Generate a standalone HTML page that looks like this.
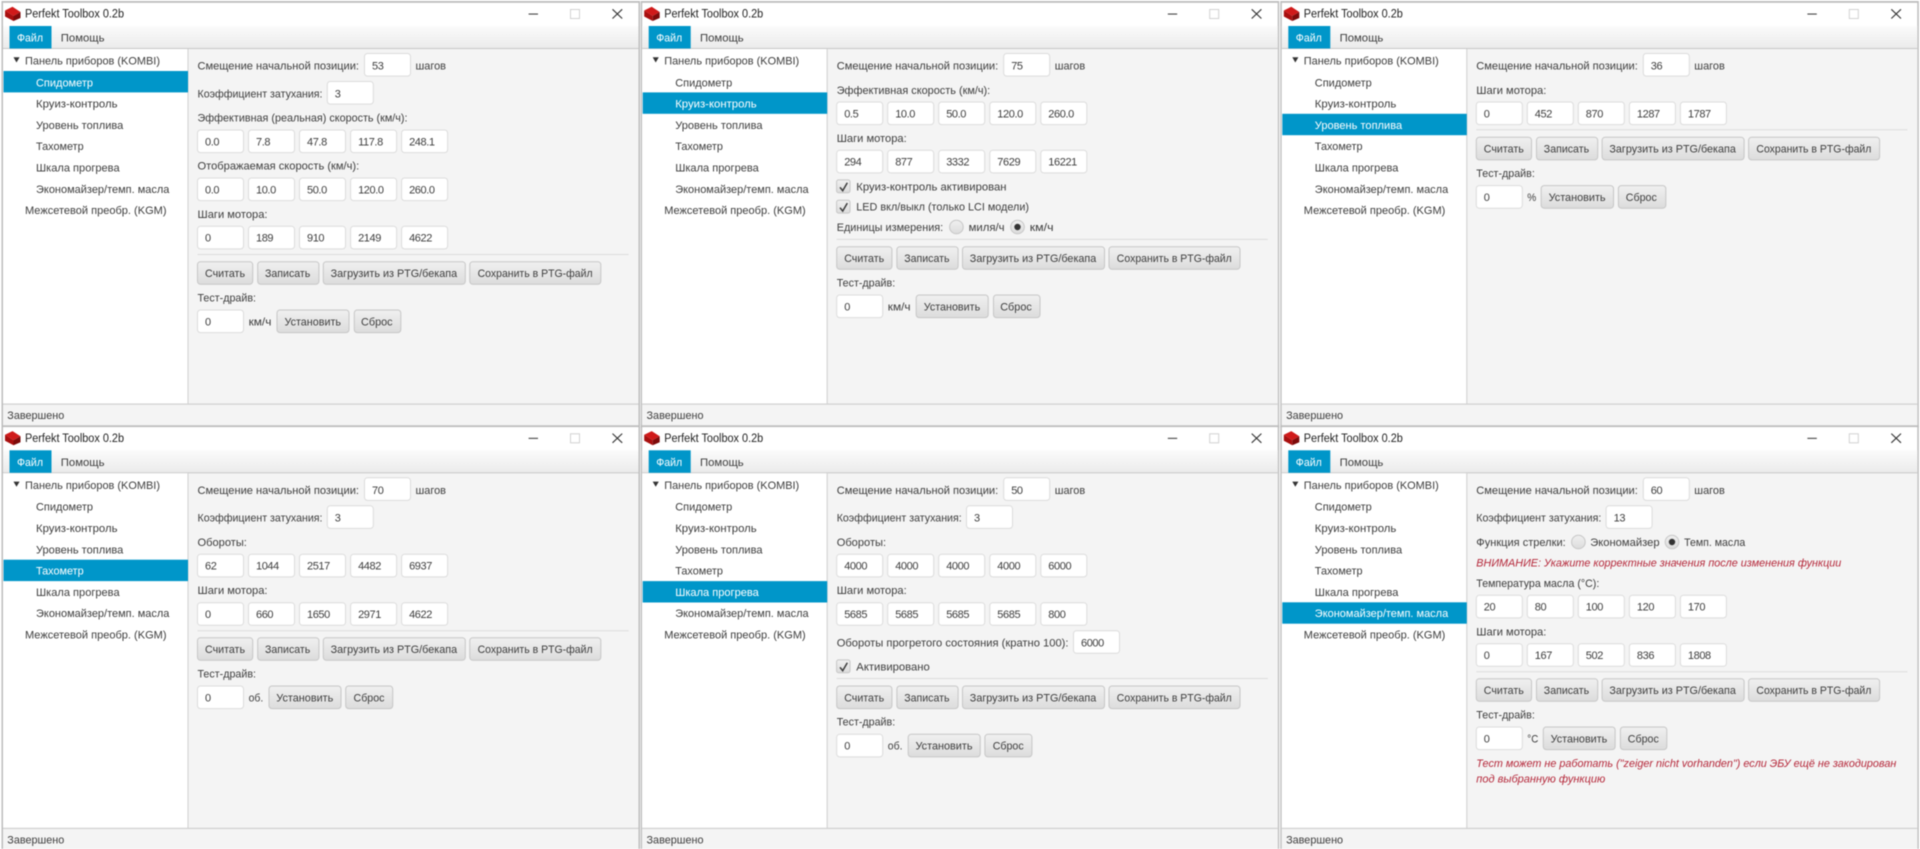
<!DOCTYPE html>
<html lang="ru"><head><meta charset="utf-8"><title>Perfekt Toolbox 0.2b</title>
<style>
html,body{margin:0;padding:0;width:1920px;height:849px;overflow:hidden;background:#fff}
svg{display:block;filter:blur(.5px)}
text{font-family:"Liberation Sans","DejaVu Sans",sans-serif;font-size:11.3px;fill:#3d3d3d;white-space:pre}
.v{letter-spacing:-.4px;font-size:11px}
.w{fill:#fff}
.r{fill:#b5283a;font-style:italic}
.t{fill:#222;font-size:11.5px}
.i{width:46px;height:22.6px;rx:3px;fill:#fff;stroke:#dcdcdc;stroke-width:1}
.i2{height:22.6px;rx:3px;fill:url(#gb);stroke:#c6c6c6;stroke-width:1}
.s{stroke:#dcdcdc;stroke-width:1}
.sel{fill:#0096c9;width:184.5px;height:21.4px;x:3.5px}
.ck{fill:none;stroke:#3a3a3a;stroke-width:1.5}
</style></head><body>
<svg xmlns="http://www.w3.org/2000/svg" width="1920" height="849" viewBox="0 0 1920 849">
<defs>
<linearGradient id="gb" x1="0" y1="0" x2="0" y2="1"><stop offset="0" stop-color="#f0f0f0"/><stop offset="1" stop-color="#dcdcdc"/></linearGradient>
<linearGradient id="gm" x1="0" y1="0" x2="0" y2="1"><stop offset="0" stop-color="#fbfbfb"/><stop offset="1" stop-color="#ebebeb"/></linearGradient>
<g id="chrome">
<rect x="1.5" y="1" width="638.5" height="426.5" fill="#bdbdbd"/>
<rect x="3" y="2.8" width="635.5" height="423" fill="#fff"/>
<rect x="3" y="26" width="635.5" height="22.5" fill="url(#gm)"/>
<rect x="3" y="48" width="635.5" height="1.2" fill="#c8c8c8"/>
<rect x="3" y="49" width="635.5" height="377" fill="#f4f4f4"/>
<rect x="3" y="49" width="184.5" height="354.5" fill="#fff"/>
<rect x="187.5" y="49" width="1" height="355" fill="#d0d0d0"/>
<rect x="3" y="403.5" width="635.5" height="1.2" fill="#d0d0d0"/>
<rect x="9.5" y="26" width="42" height="22.5" fill="#0096c9"/>
<polygon points="13.5,57.3 19.6,57.3 16.5,62.5" fill="#333"/>
<rect x="528.6" y="13.5" width="9.4" height="1.1" fill="#444"/>
<rect x="570.5" y="9.5" width="9" height="9" fill="none" stroke="#d2d2d2" stroke-width="1"/>
<path d="M612.5 9.3L622.2 18.5M622.2 9.3L612.5 18.5" stroke="#333" stroke-width="1.1" fill="none"/>
<polygon points="5,10.5 12.5,6.8 20.5,12 13.5,16" fill="#d01a1a"/>
<polygon points="5,10.5 13.5,16 13.5,21 5,16.5" fill="#a80f0f"/>
<polygon points="13.5,16 20.5,12 20.5,18 13.5,21" fill="#7d0a0a"/>
</g>
<g id="btns">
<rect class="i2" x="197.5" y="0" width="55.2"/>
<rect class="i2" x="257.7" y="0" width="61.2"/>
<rect class="i2" x="323.3" y="0" width="142"/>
<rect class="i2" x="469.8" y="0" width="131"/>
</g>
<g id="row5">
<rect class="i" x="197.5" y="0"/><rect class="i" x="248.5" y="0"/><rect class="i" x="299.5" y="0"/><rect class="i" x="350.6" y="0"/><rect class="i" x="401.6" y="0"/>
</g>
<g id="cb"><rect x="197.4" y="-6.4" width="13.4" height="12.8" rx="2" fill="url(#gb)" stroke="#c6c6c6"/><path class="ck" d="M200.8 1L203.5 4.4L208.1-3.6"/></g>
</defs>

<!-- WINDOW 1 -->
<g transform="translate(0,0)">
<use href="#chrome"/>
<text class="t" x="25" y="17.5" textLength="99" lengthAdjust="spacingAndGlyphs">Perfekt Toolbox 0.2b</text>
<text class="w" x="17" y="41.5" textLength="26" lengthAdjust="spacingAndGlyphs">Файл</text>
<text x="60.8" y="41.5" textLength="43.7" lengthAdjust="spacingAndGlyphs">Помощь</text>
<rect class="sel" y="71"/>
<text x="25" y="64.7" textLength="135" lengthAdjust="spacingAndGlyphs">Панель приборов (KOMBI)</text>
<text class="w" x="36" y="86.3" textLength="57" lengthAdjust="spacingAndGlyphs">Спидометр</text>
<text x="36" y="107.7" textLength="81.5" lengthAdjust="spacingAndGlyphs">Круиз-контроль</text>
<text x="36" y="129" textLength="87.3" lengthAdjust="spacingAndGlyphs">Уровень топлива</text>
<text x="36" y="150.2" textLength="47.7" lengthAdjust="spacingAndGlyphs">Тахометр</text>
<text x="36" y="171.5" textLength="83.6" lengthAdjust="spacingAndGlyphs">Шкала прогрева</text>
<text x="36" y="192.8" textLength="133.4" lengthAdjust="spacingAndGlyphs">Экономайзер/темп. масла</text>
<text x="25" y="214" textLength="141.5" lengthAdjust="spacingAndGlyphs">Межсетевой преобр. (KGM)</text>
<text x="7.3" y="419" textLength="57" lengthAdjust="spacingAndGlyphs">Завершено</text>
<text x="197.5" y="69.7" textLength="161.5" lengthAdjust="spacingAndGlyphs">Смещение начальной позиции:</text>
<rect class="i" x="364.5" y="53.5"/><text class="v" x="372" y="69.7">53</text>
<text x="415.5" y="69.7" textLength="30.5" lengthAdjust="spacingAndGlyphs">шагов</text>
<text x="197.5" y="97.3" textLength="125" lengthAdjust="spacingAndGlyphs">Коэффициент затухания:</text>
<rect class="i" x="327.3" y="81.5"/><text class="v" x="334.8" y="97.3">3</text>
<text x="197.5" y="121.7" textLength="210" lengthAdjust="spacingAndGlyphs">Эффективная (реальная) скорость (км/ч):</text>
<use href="#row5" y="130"/>
<text class="v" x="205" y="145.3">0.0</text><text class="v" x="256" y="145.3">7.8</text><text class="v" x="307" y="145.3">47.8</text><text class="v" x="358.1" y="145.3">117.8</text><text class="v" x="409.1" y="145.3">248.1</text>
<text x="197.5" y="169.7" textLength="161.7" lengthAdjust="spacingAndGlyphs">Отображаемая скорость (км/ч):</text>
<use href="#row5" y="178"/>
<text class="v" x="205" y="193.3">0.0</text><text class="v" x="256" y="193.3">10.0</text><text class="v" x="307" y="193.3">50.0</text><text class="v" x="358.1" y="193.3">120.0</text><text class="v" x="409.1" y="193.3">260.0</text>
<text x="197.5" y="218" textLength="70" lengthAdjust="spacingAndGlyphs">Шаги мотора:</text>
<use href="#row5" y="226.3"/>
<text class="v" x="205" y="241.6">0</text><text class="v" x="256" y="241.6">189</text><text class="v" x="307" y="241.6">910</text><text class="v" x="358.1" y="241.6">2149</text><text class="v" x="409.1" y="241.6">4622</text>
<line class="s" x1="197.5" x2="628.6" y1="254.5" y2="254.5"/>
<g transform="translate(0,261.7)">
<use href="#btns"/>
<text x="205" y="15.3" textLength="40" lengthAdjust="spacingAndGlyphs">Считать</text>
<text x="265" y="15.3" textLength="45.3" lengthAdjust="spacingAndGlyphs">Записать</text>
<text x="330.6" y="15.3" textLength="126.5" lengthAdjust="spacingAndGlyphs">Загрузить из PTG/бекапа</text>
<text x="477.6" y="15.3" textLength="115" lengthAdjust="spacingAndGlyphs">Сохранить в PTG-файл</text>
<text x="197.5" y="39.6" textLength="58.5" lengthAdjust="spacingAndGlyphs">Тест-драйв:</text>
<rect class="i" x="197.5" y="48.3"/><text class="v" x="205" y="63.6">0</text>
<text x="248.6" y="63.6" textLength="22.8" lengthAdjust="spacingAndGlyphs">км/ч</text>
<rect class="i2" x="277" y="48.3" width="72"/><text x="284.5" y="63.6" textLength="56.5" lengthAdjust="spacingAndGlyphs">Установить</text>
<rect class="i2" x="354.3" y="48.3" width="46.5"/><text x="361" y="63.6" textLength="31.6" lengthAdjust="spacingAndGlyphs">Сброс</text>
</g>
</g>

<!-- WINDOW 2 -->
<g transform="translate(639.2,0)">
<use href="#chrome"/>
<text class="t" x="25" y="17.5" textLength="99" lengthAdjust="spacingAndGlyphs">Perfekt Toolbox 0.2b</text>
<text class="w" x="17" y="41.5" textLength="26" lengthAdjust="spacingAndGlyphs">Файл</text>
<text x="60.8" y="41.5" textLength="43.7" lengthAdjust="spacingAndGlyphs">Помощь</text>
<rect class="sel" y="92.4"/>
<text x="25" y="64.7" textLength="135" lengthAdjust="spacingAndGlyphs">Панель приборов (KOMBI)</text>
<text x="36" y="86.3" textLength="57" lengthAdjust="spacingAndGlyphs">Спидометр</text>
<text class="w" x="36" y="107.7" textLength="81.5" lengthAdjust="spacingAndGlyphs">Круиз-контроль</text>
<text x="36" y="129" textLength="87.3" lengthAdjust="spacingAndGlyphs">Уровень топлива</text>
<text x="36" y="150.2" textLength="47.7" lengthAdjust="spacingAndGlyphs">Тахометр</text>
<text x="36" y="171.5" textLength="83.6" lengthAdjust="spacingAndGlyphs">Шкала прогрева</text>
<text x="36" y="192.8" textLength="133.4" lengthAdjust="spacingAndGlyphs">Экономайзер/темп. масла</text>
<text x="25" y="214" textLength="141.5" lengthAdjust="spacingAndGlyphs">Межсетевой преобр. (KGM)</text>
<text x="7.3" y="419" textLength="57" lengthAdjust="spacingAndGlyphs">Завершено</text>
<text x="197.5" y="69.7" textLength="161.5" lengthAdjust="spacingAndGlyphs">Смещение начальной позиции:</text>
<rect class="i" x="364.5" y="53.5"/><text class="v" x="372" y="69.7">75</text>
<text x="415.5" y="69.7" textLength="30.5" lengthAdjust="spacingAndGlyphs">шагов</text>
<text x="197.5" y="94" textLength="153.5" lengthAdjust="spacingAndGlyphs">Эффективная скорость (км/ч):</text>
<use href="#row5" y="102"/>
<text class="v" x="205" y="117.3">0.5</text><text class="v" x="256" y="117.3">10.0</text><text class="v" x="307" y="117.3">50.0</text><text class="v" x="358.1" y="117.3">120.0</text><text class="v" x="409.1" y="117.3">260.0</text>
<text x="197.5" y="142" textLength="70" lengthAdjust="spacingAndGlyphs">Шаги мотора:</text>
<use href="#row5" y="150.3"/>
<text class="v" x="205" y="165.6">294</text><text class="v" x="256" y="165.6">877</text><text class="v" x="307" y="165.6">3332</text><text class="v" x="358.1" y="165.6">7629</text><text class="v" x="409.1" y="165.6">16221</text>
<use href="#cb" y="186.3"/>
<text x="217.1" y="190.3" textLength="150.2" lengthAdjust="spacingAndGlyphs">Круиз-контроль активирован</text>
<use href="#cb" y="206.7"/>
<text x="217.1" y="210.7" textLength="172.7" lengthAdjust="spacingAndGlyphs">LED вкл/выкл (только LCI модели)</text>
<text x="197.5" y="231" textLength="106.5" lengthAdjust="spacingAndGlyphs">Единицы измерения:</text>
<circle cx="317.2" cy="227" r="6.8" fill="url(#gb)" stroke="#c6c6c6"/>
<text x="329.4" y="231" textLength="36" lengthAdjust="spacingAndGlyphs">миля/ч</text>
<circle cx="378.3" cy="227" r="6.8" fill="url(#gb)" stroke="#c6c6c6"/><circle cx="378.3" cy="227" r="3.2" fill="#333"/>
<text x="390.6" y="231" textLength="23.7" lengthAdjust="spacingAndGlyphs">км/ч</text>
<line class="s" x1="197.5" x2="628.6" y1="239.4" y2="239.4"/>
<g transform="translate(0,246.7)">
<use href="#btns"/>
<text x="205" y="15.3" textLength="40" lengthAdjust="spacingAndGlyphs">Считать</text>
<text x="265" y="15.3" textLength="45.3" lengthAdjust="spacingAndGlyphs">Записать</text>
<text x="330.6" y="15.3" textLength="126.5" lengthAdjust="spacingAndGlyphs">Загрузить из PTG/бекапа</text>
<text x="477.6" y="15.3" textLength="115" lengthAdjust="spacingAndGlyphs">Сохранить в PTG-файл</text>
<text x="197.5" y="39.6" textLength="58.5" lengthAdjust="spacingAndGlyphs">Тест-драйв:</text>
<rect class="i" x="197.5" y="48.3"/><text class="v" x="205" y="63.6">0</text>
<text x="248.6" y="63.6" textLength="22.8" lengthAdjust="spacingAndGlyphs">км/ч</text>
<rect class="i2" x="277" y="48.3" width="72"/><text x="284.5" y="63.6" textLength="56.5" lengthAdjust="spacingAndGlyphs">Установить</text>
<rect class="i2" x="354.3" y="48.3" width="46.5"/><text x="361" y="63.6" textLength="31.6" lengthAdjust="spacingAndGlyphs">Сброс</text>
</g>
</g>

<!-- WINDOW 3 -->
<g transform="translate(1278.8,0)">
<use href="#chrome"/>
<text class="t" x="25" y="17.5" textLength="99" lengthAdjust="spacingAndGlyphs">Perfekt Toolbox 0.2b</text>
<text class="w" x="17" y="41.5" textLength="26" lengthAdjust="spacingAndGlyphs">Файл</text>
<text x="60.8" y="41.5" textLength="43.7" lengthAdjust="spacingAndGlyphs">Помощь</text>
<rect class="sel" y="113.8"/>
<text x="25" y="64.7" textLength="135" lengthAdjust="spacingAndGlyphs">Панель приборов (KOMBI)</text>
<text x="36" y="86.3" textLength="57" lengthAdjust="spacingAndGlyphs">Спидометр</text>
<text x="36" y="107.7" textLength="81.5" lengthAdjust="spacingAndGlyphs">Круиз-контроль</text>
<text class="w" x="36" y="129" textLength="87.3" lengthAdjust="spacingAndGlyphs">Уровень топлива</text>
<text x="36" y="150.2" textLength="47.7" lengthAdjust="spacingAndGlyphs">Тахометр</text>
<text x="36" y="171.5" textLength="83.6" lengthAdjust="spacingAndGlyphs">Шкала прогрева</text>
<text x="36" y="192.8" textLength="133.4" lengthAdjust="spacingAndGlyphs">Экономайзер/темп. масла</text>
<text x="25" y="214" textLength="141.5" lengthAdjust="spacingAndGlyphs">Межсетевой преобр. (KGM)</text>
<text x="7.3" y="419" textLength="57" lengthAdjust="spacingAndGlyphs">Завершено</text>
<text x="197.5" y="69.7" textLength="161.5" lengthAdjust="spacingAndGlyphs">Смещение начальной позиции:</text>
<rect class="i" x="364.5" y="53.5"/><text class="v" x="372" y="69.7">36</text>
<text x="415.5" y="69.7" textLength="30.5" lengthAdjust="spacingAndGlyphs">шагов</text>
<text x="197.5" y="94" textLength="70" lengthAdjust="spacingAndGlyphs">Шаги мотора:</text>
<use href="#row5" y="102"/>
<text class="v" x="205" y="117.3">0</text><text class="v" x="256" y="117.3">452</text><text class="v" x="307" y="117.3">870</text><text class="v" x="358.1" y="117.3">1287</text><text class="v" x="409.1" y="117.3">1787</text>
<line class="s" x1="197.5" x2="628.6" y1="129.7" y2="129.7"/>
<g transform="translate(0,137.3)">
<use href="#btns"/>
<text x="205" y="15.3" textLength="40" lengthAdjust="spacingAndGlyphs">Считать</text>
<text x="265" y="15.3" textLength="45.3" lengthAdjust="spacingAndGlyphs">Записать</text>
<text x="330.6" y="15.3" textLength="126.5" lengthAdjust="spacingAndGlyphs">Загрузить из PTG/бекапа</text>
<text x="477.6" y="15.3" textLength="115" lengthAdjust="spacingAndGlyphs">Сохранить в PTG-файл</text>
<text x="197.5" y="39.6" textLength="58.5" lengthAdjust="spacingAndGlyphs">Тест-драйв:</text>
<rect class="i" x="197.5" y="48.3"/><text class="v" x="205" y="63.6">0</text>
<text x="248.5" y="63.6" textLength="9" lengthAdjust="spacingAndGlyphs">%</text>
<rect class="i2" x="262.4" y="48.3" width="72.3"/><text x="269.8" y="63.6" textLength="57" lengthAdjust="spacingAndGlyphs">Установить</text>
<rect class="i2" x="339.6" y="48.3" width="47.4"/><text x="347" y="63.6" textLength="31" lengthAdjust="spacingAndGlyphs">Сброс</text>
</g>
</g>

<!-- WINDOW 4 -->
<g transform="translate(0,424.3)">
<use href="#chrome"/>
<text class="t" x="25" y="17.5" textLength="99" lengthAdjust="spacingAndGlyphs">Perfekt Toolbox 0.2b</text>
<text class="w" x="17" y="41.5" textLength="26" lengthAdjust="spacingAndGlyphs">Файл</text>
<text x="60.8" y="41.5" textLength="43.7" lengthAdjust="spacingAndGlyphs">Помощь</text>
<rect class="sel" y="135.4"/>
<text x="25" y="64.7" textLength="135" lengthAdjust="spacingAndGlyphs">Панель приборов (KOMBI)</text>
<text x="36" y="86.3" textLength="57" lengthAdjust="spacingAndGlyphs">Спидометр</text>
<text x="36" y="107.7" textLength="81.5" lengthAdjust="spacingAndGlyphs">Круиз-контроль</text>
<text x="36" y="129" textLength="87.3" lengthAdjust="spacingAndGlyphs">Уровень топлива</text>
<text class="w" x="36" y="150.2" textLength="47.7" lengthAdjust="spacingAndGlyphs">Тахометр</text>
<text x="36" y="171.5" textLength="83.6" lengthAdjust="spacingAndGlyphs">Шкала прогрева</text>
<text x="36" y="192.8" textLength="133.4" lengthAdjust="spacingAndGlyphs">Экономайзер/темп. масла</text>
<text x="25" y="214" textLength="141.5" lengthAdjust="spacingAndGlyphs">Межсетевой преобр. (KGM)</text>
<text x="7.3" y="419" textLength="57" lengthAdjust="spacingAndGlyphs">Завершено</text>
<text x="197.5" y="69.7" textLength="161.5" lengthAdjust="spacingAndGlyphs">Смещение начальной позиции:</text>
<rect class="i" x="364.5" y="53.5"/><text class="v" x="372" y="69.7">70</text>
<text x="415.5" y="69.7" textLength="30.5" lengthAdjust="spacingAndGlyphs">шагов</text>
<text x="197.5" y="97.3" textLength="125" lengthAdjust="spacingAndGlyphs">Коэффициент затухания:</text>
<rect class="i" x="327.3" y="81.5"/><text class="v" x="334.8" y="97.3">3</text>
<text x="197.5" y="121.7" textLength="49.4" lengthAdjust="spacingAndGlyphs">Обороты:</text>
<use href="#row5" y="130"/>
<text class="v" x="205" y="145.3">62</text><text class="v" x="256" y="145.3">1044</text><text class="v" x="307" y="145.3">2517</text><text class="v" x="358.1" y="145.3">4482</text><text class="v" x="409.1" y="145.3">6937</text>
<text x="197.5" y="169.7" textLength="70" lengthAdjust="spacingAndGlyphs">Шаги мотора:</text>
<use href="#row5" y="178.4"/>
<text class="v" x="205" y="193.7">0</text><text class="v" x="256" y="193.7">660</text><text class="v" x="307" y="193.7">1650</text><text class="v" x="358.1" y="193.7">2971</text><text class="v" x="409.1" y="193.7">4622</text>
<line class="s" x1="197.5" x2="628.6" y1="206.4" y2="206.4"/>
<g transform="translate(0,213.4)">
<use href="#btns"/>
<text x="205" y="15.3" textLength="40" lengthAdjust="spacingAndGlyphs">Считать</text>
<text x="265" y="15.3" textLength="45.3" lengthAdjust="spacingAndGlyphs">Записать</text>
<text x="330.6" y="15.3" textLength="126.5" lengthAdjust="spacingAndGlyphs">Загрузить из PTG/бекапа</text>
<text x="477.6" y="15.3" textLength="115" lengthAdjust="spacingAndGlyphs">Сохранить в PTG-файл</text>
<text x="197.5" y="39.6" textLength="58.5" lengthAdjust="spacingAndGlyphs">Тест-драйв:</text>
<rect class="i" x="197.5" y="48.3"/><text class="v" x="205" y="63.6">0</text>
<text x="248.6" y="63.6" textLength="14.7" lengthAdjust="spacingAndGlyphs">об.</text>
<rect class="i2" x="269" y="48.3" width="72"/><text x="276.3" y="63.6" textLength="57" lengthAdjust="spacingAndGlyphs">Установить</text>
<rect class="i2" x="345.7" y="48.3" width="47"/><text x="353.5" y="63.6" textLength="31" lengthAdjust="spacingAndGlyphs">Сброс</text>
</g>
</g>

<!-- WINDOW 5 -->
<g transform="translate(639.2,424.3)">
<use href="#chrome"/>
<text class="t" x="25" y="17.5" textLength="99" lengthAdjust="spacingAndGlyphs">Perfekt Toolbox 0.2b</text>
<text class="w" x="17" y="41.5" textLength="26" lengthAdjust="spacingAndGlyphs">Файл</text>
<text x="60.8" y="41.5" textLength="43.7" lengthAdjust="spacingAndGlyphs">Помощь</text>
<rect class="sel" y="156.8"/>
<text x="25" y="64.7" textLength="135" lengthAdjust="spacingAndGlyphs">Панель приборов (KOMBI)</text>
<text x="36" y="86.3" textLength="57" lengthAdjust="spacingAndGlyphs">Спидометр</text>
<text x="36" y="107.7" textLength="81.5" lengthAdjust="spacingAndGlyphs">Круиз-контроль</text>
<text x="36" y="129" textLength="87.3" lengthAdjust="spacingAndGlyphs">Уровень топлива</text>
<text x="36" y="150.2" textLength="47.7" lengthAdjust="spacingAndGlyphs">Тахометр</text>
<text class="w" x="36" y="171.5" textLength="83.6" lengthAdjust="spacingAndGlyphs">Шкала прогрева</text>
<text x="36" y="192.8" textLength="133.4" lengthAdjust="spacingAndGlyphs">Экономайзер/темп. масла</text>
<text x="25" y="214" textLength="141.5" lengthAdjust="spacingAndGlyphs">Межсетевой преобр. (KGM)</text>
<text x="7.3" y="419" textLength="57" lengthAdjust="spacingAndGlyphs">Завершено</text>
<text x="197.5" y="69.7" textLength="161.5" lengthAdjust="spacingAndGlyphs">Смещение начальной позиции:</text>
<rect class="i" x="364.5" y="53.5"/><text class="v" x="372" y="69.7">50</text>
<text x="415.5" y="69.7" textLength="30.5" lengthAdjust="spacingAndGlyphs">шагов</text>
<text x="197.5" y="97.3" textLength="125" lengthAdjust="spacingAndGlyphs">Коэффициент затухания:</text>
<rect class="i" x="327.3" y="81.5"/><text class="v" x="334.8" y="97.3">3</text>
<text x="197.5" y="121.7" textLength="49.4" lengthAdjust="spacingAndGlyphs">Обороты:</text>
<use href="#row5" y="130"/>
<text class="v" x="205" y="145.3">4000</text><text class="v" x="256" y="145.3">4000</text><text class="v" x="307" y="145.3">4000</text><text class="v" x="358.1" y="145.3">4000</text><text class="v" x="409.1" y="145.3">6000</text>
<text x="197.5" y="169.7" textLength="70" lengthAdjust="spacingAndGlyphs">Шаги мотора:</text>
<use href="#row5" y="178.4"/>
<text class="v" x="205" y="193.7">5685</text><text class="v" x="256" y="193.7">5685</text><text class="v" x="307" y="193.7">5685</text><text class="v" x="358.1" y="193.7">5685</text><text class="v" x="409.1" y="193.7">800</text>
<text x="197.5" y="222" textLength="231.8" lengthAdjust="spacingAndGlyphs">Обороты прогретого состояния (кратно 100):</text>
<rect class="i" x="434.3" y="206.4"/><text class="v" x="441.8" y="222">6000</text>
<use href="#cb" y="242"/>
<text x="217.1" y="246" textLength="73.5" lengthAdjust="spacingAndGlyphs">Активировано</text>
<line class="s" x1="197.5" x2="628.6" y1="254.2" y2="254.2"/>
<g transform="translate(0,261.7)">
<use href="#btns"/>
<text x="205" y="15.3" textLength="40" lengthAdjust="spacingAndGlyphs">Считать</text>
<text x="265" y="15.3" textLength="45.3" lengthAdjust="spacingAndGlyphs">Записать</text>
<text x="330.6" y="15.3" textLength="126.5" lengthAdjust="spacingAndGlyphs">Загрузить из PTG/бекапа</text>
<text x="477.6" y="15.3" textLength="115" lengthAdjust="spacingAndGlyphs">Сохранить в PTG-файл</text>
<text x="197.5" y="39.6" textLength="58.5" lengthAdjust="spacingAndGlyphs">Тест-драйв:</text>
<rect class="i" x="197.5" y="48.3"/><text class="v" x="205" y="63.6">0</text>
<text x="248.6" y="63.6" textLength="14.7" lengthAdjust="spacingAndGlyphs">об.</text>
<rect class="i2" x="269" y="48.3" width="72"/><text x="276.3" y="63.6" textLength="57" lengthAdjust="spacingAndGlyphs">Установить</text>
<rect class="i2" x="345.7" y="48.3" width="47"/><text x="353.5" y="63.6" textLength="31" lengthAdjust="spacingAndGlyphs">Сброс</text>
</g>
</g>

<!-- WINDOW 6 -->
<g transform="translate(1278.8,424.3)">
<use href="#chrome"/>
<text class="t" x="25" y="17.5" textLength="99" lengthAdjust="spacingAndGlyphs">Perfekt Toolbox 0.2b</text>
<text class="w" x="17" y="41.5" textLength="26" lengthAdjust="spacingAndGlyphs">Файл</text>
<text x="60.8" y="41.5" textLength="43.7" lengthAdjust="spacingAndGlyphs">Помощь</text>
<rect class="sel" y="178"/>
<text x="25" y="64.7" textLength="135" lengthAdjust="spacingAndGlyphs">Панель приборов (KOMBI)</text>
<text x="36" y="86.3" textLength="57" lengthAdjust="spacingAndGlyphs">Спидометр</text>
<text x="36" y="107.7" textLength="81.5" lengthAdjust="spacingAndGlyphs">Круиз-контроль</text>
<text x="36" y="129" textLength="87.3" lengthAdjust="spacingAndGlyphs">Уровень топлива</text>
<text x="36" y="150.2" textLength="47.7" lengthAdjust="spacingAndGlyphs">Тахометр</text>
<text x="36" y="171.5" textLength="83.6" lengthAdjust="spacingAndGlyphs">Шкала прогрева</text>
<text class="w" x="36" y="192.8" textLength="133.4" lengthAdjust="spacingAndGlyphs">Экономайзер/темп. масла</text>
<text x="25" y="214" textLength="141.5" lengthAdjust="spacingAndGlyphs">Межсетевой преобр. (KGM)</text>
<text x="7.3" y="419" textLength="57" lengthAdjust="spacingAndGlyphs">Завершено</text>
<text x="197.5" y="69.7" textLength="161.5" lengthAdjust="spacingAndGlyphs">Смещение начальной позиции:</text>
<rect class="i" x="364.5" y="53.5"/><text class="v" x="372" y="69.7">60</text>
<text x="415.5" y="69.7" textLength="30.5" lengthAdjust="spacingAndGlyphs">шагов</text>
<text x="197.5" y="97.3" textLength="125" lengthAdjust="spacingAndGlyphs">Коэффициент затухания:</text>
<rect class="i" x="327.3" y="81.5"/><text class="v" x="334.8" y="97.3">13</text>
<text x="197.5" y="121.7" textLength="89.4" lengthAdjust="spacingAndGlyphs">Функция стрелки:</text>
<circle cx="299.6" cy="117.7" r="6.8" fill="url(#gb)" stroke="#c6c6c6"/>
<text x="311.4" y="121.7" textLength="69.4" lengthAdjust="spacingAndGlyphs">Экономайзер</text>
<circle cx="393.2" cy="117.7" r="6.8" fill="url(#gb)" stroke="#c6c6c6"/><circle cx="393.2" cy="117.7" r="3.2" fill="#333"/>
<text x="405.3" y="121.7" textLength="61.2" lengthAdjust="spacingAndGlyphs">Темп. масла</text>
<text class="r" x="197.5" y="142.4" textLength="365" lengthAdjust="spacingAndGlyphs">ВНИМАНИЕ: Укажите корректные значения после изменения функции</text>
<text x="197.5" y="162.7" textLength="123" lengthAdjust="spacingAndGlyphs">Температура масла (°C):</text>
<use href="#row5" y="171"/>
<text class="v" x="205" y="186.3">20</text><text class="v" x="256" y="186.3">80</text><text class="v" x="307" y="186.3">100</text><text class="v" x="358.1" y="186.3">120</text><text class="v" x="409.1" y="186.3">170</text>
<text x="197.5" y="211" textLength="70" lengthAdjust="spacingAndGlyphs">Шаги мотора:</text>
<use href="#row5" y="219.4"/>
<text class="v" x="205" y="234.7">0</text><text class="v" x="256" y="234.7">167</text><text class="v" x="307" y="234.7">502</text><text class="v" x="358.1" y="234.7">836</text><text class="v" x="409.1" y="234.7">1808</text>
<line class="s" x1="197.5" x2="628.6" y1="247.4" y2="247.4"/>
<g transform="translate(0,254.4)">
<use href="#btns"/>
<text x="205" y="15.3" textLength="40" lengthAdjust="spacingAndGlyphs">Считать</text>
<text x="265" y="15.3" textLength="45.3" lengthAdjust="spacingAndGlyphs">Записать</text>
<text x="330.6" y="15.3" textLength="126.5" lengthAdjust="spacingAndGlyphs">Загрузить из PTG/бекапа</text>
<text x="477.6" y="15.3" textLength="115" lengthAdjust="spacingAndGlyphs">Сохранить в PTG-файл</text>
<text x="197.5" y="39.6" textLength="58.5" lengthAdjust="spacingAndGlyphs">Тест-драйв:</text>
<rect class="i" x="197.5" y="48.3"/><text class="v" x="205" y="63.6">0</text>
<text x="248.5" y="63.6" textLength="11" lengthAdjust="spacingAndGlyphs">°C</text>
<rect class="i2" x="264.5" y="48.3" width="71.8"/><text x="271.8" y="63.6" textLength="56.7" lengthAdjust="spacingAndGlyphs">Установить</text>
<rect class="i2" x="341.6" y="48.3" width="46.4"/><text x="349" y="63.6" textLength="31" lengthAdjust="spacingAndGlyphs">Сброс</text>
</g>
<text class="r" x="197.5" y="342.7" textLength="420" lengthAdjust="spacingAndGlyphs">Тест может не работать ("zeiger nicht vorhanden") если ЭБУ ещё не закодирован</text>
<text class="r" x="197.5" y="358.4" textLength="129" lengthAdjust="spacingAndGlyphs">под выбранную функцию</text>
</g>
</svg>
</body></html>
